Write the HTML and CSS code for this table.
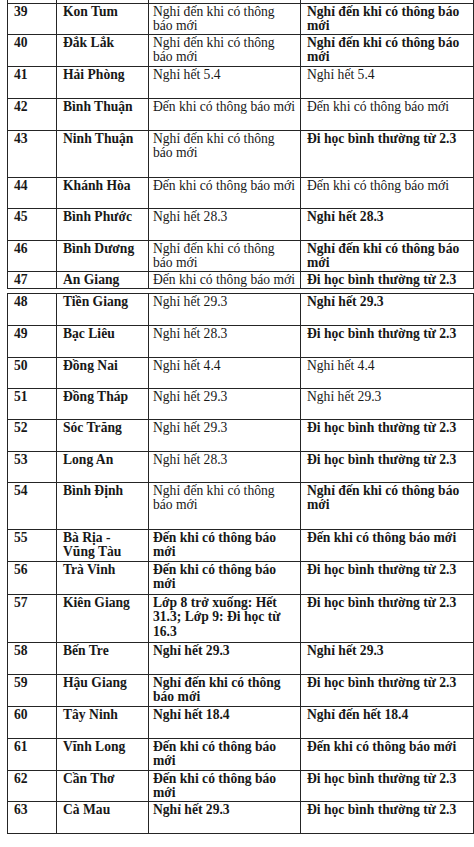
FILE: index.html
```html
<!DOCTYPE html>
<html lang="vi">
<head>
<meta charset="utf-8">
<title>Danh sách</title>
<link rel="stylesheet" href="styles.css">
</head>
<body>
<div class="page">
<table class="tbl t1">
<colgroup><col class="c1"><col class="c2"><col class="c3"><col class="c4"></colgroup>
<tr class="stub"><td></td><td></td><td></td><td></td></tr>
<tr class="p31"><td>39</td><td>Kon Tum</td><td class="n">Nghỉ đến khi có thông<br>báo mới</td><td>Nghỉ đến khi có thông báo<br>mới</td></tr>
<tr class="p32"><td>40</td><td>Đắk Lắk</td><td class="n">Nghỉ đến khi có thông<br>báo mới</td><td>Nghỉ đến khi có thông báo<br>mới</td></tr>
<tr class="p32"><td>41</td><td>Hải Phòng</td><td class="n">Nghỉ hết 5.4</td><td class="n">Nghỉ hết 5.4</td></tr>
<tr class="p32"><td>42</td><td>Bình Thuận</td><td class="n">Đến khi có thông báo mới</td><td class="n">Đến khi có thông báo mới</td></tr>
<tr class="p47"><td>43</td><td>Ninh Thuận</td><td class="n">Nghỉ đến khi có thông<br>báo mới</td><td>Đi học bình thường từ 2.3</td></tr>
<tr class="p31"><td>44</td><td>Khánh Hòa</td><td class="n">Đến khi có thông báo mới</td><td class="n">Đến khi có thông báo mới</td></tr>
<tr class="p32"><td>45</td><td>Bình Phước</td><td class="n">Nghỉ hết 28.3</td><td>Nghỉ hết 28.3</td></tr>
<tr class="p31"><td>46</td><td>Bình Dương</td><td class="n">Nghỉ đến khi có thông<br>báo mới</td><td>Nghỉ đến khi có thông báo<br>mới</td></tr>
<tr class="p17"><td>47</td><td>An Giang</td><td class="n">Đến khi có thông báo mới</td><td>Đi học bình thường từ 2.3</td></tr>
</table>
<table class="tbl t2">
<colgroup><col class="c1"><col class="c2"><col class="c3"><col class="c4"></colgroup>
<tr class="p32"><td>48</td><td>Tiền Giang</td><td class="n">Nghỉ hết 29.3</td><td>Nghỉ hết 29.3</td></tr>
<tr class="p32"><td>49</td><td>Bạc Liêu</td><td class="n">Nghỉ hết 28.3</td><td>Đi học bình thường từ 2.3</td></tr>
<tr class="p31"><td>50</td><td>Đồng Nai</td><td class="n">Nghỉ hết 4.4</td><td class="n">Nghỉ hết 4.4</td></tr>
<tr class="p31"><td>51</td><td>Đồng Tháp</td><td class="n">Nghỉ hết 29.3</td><td class="n">Nghỉ hết 29.3</td></tr>
<tr class="p32"><td>52</td><td>Sóc Trăng</td><td class="n">Nghỉ hết 29.3</td><td>Đi học bình thường từ 2.3</td></tr>
<tr class="p31"><td>53</td><td>Long An</td><td class="n">Nghỉ hết 28.3</td><td>Đi học bình thường từ 2.3</td></tr>
<tr class="p47"><td>54</td><td>Bình Định</td><td class="n">Nghỉ đến khi có thông<br>báo mới</td><td>Nghỉ đến khi có thông báo<br>mới</td></tr>
<tr class="p32"><td>55</td><td>Bà Rịa -<br>Vũng Tàu</td><td>Đến khi có thông báo<br>mới</td><td>Đến khi có thông báo mới</td></tr>
<tr class="p33"><td>56</td><td>Trà Vinh</td><td>Đến khi có thông báo<br>mới</td><td>Đi học bình thường từ 2.3</td></tr>
<tr class="p48"><td>57</td><td>Kiên Giang</td><td>Lớp 8 trở xuống: Hết<br>31.3; Lớp 9: Đi học từ<br>16.3</td><td>Đi học bình thường từ 2.3</td></tr>
<tr class="p32"><td>58</td><td>Bến Tre</td><td>Nghỉ hết 29.3</td><td>Nghỉ hết 29.3</td></tr>
<tr class="p32"><td>59</td><td>Hậu Giang</td><td>Nghỉ đến khi có thông<br>báo mới</td><td>Đi học bình thường từ 2.3</td></tr>
<tr class="p32"><td>60</td><td>Tây Ninh</td><td>Nghỉ hết 18.4</td><td>Nghỉ đến hết 18.4</td></tr>
<tr class="p32"><td>61</td><td>Vĩnh Long</td><td>Đến khi có thông báo<br>mới</td><td>Đến khi có thông báo mới</td></tr>
<tr class="p31"><td>62</td><td>Cần Thơ</td><td>Đến khi có thông báo<br>mới</td><td>Đi học bình thường từ 2.3</td></tr>
<tr class="p32"><td>63</td><td>Cà Mau</td><td>Nghỉ hết 29.3</td><td>Đi học bình thường từ 2.3</td></tr>
</table>
</div>
</body>
</html>
```
FILE: styles.css
```css
html, body {
  margin: 0;
  padding: 0;
  background: #ffffff;
}

body {
  font-family: "Liberation Serif", "Times New Roman", serif;
  font-size: 13.6px;
  line-height: 14.5px;
  color: #181818;
}

.page {
  padding-left: 7px;
}

.tbl {
  border-collapse: collapse;
  table-layout: fixed;
  width: 466px;
}

.t2 {
  margin-top: 4px;
}

.c1 { width: 49px; }
.c2 { width: 92px; }
.c3 { width: 152px; }
.c4 { width: 173px; }

.tbl td {
  border: 1px solid #252525;
  padding: 1px 2px 0 6px;
  vertical-align: top;
  font-weight: bold;
  white-space: nowrap;
  overflow: hidden;
  box-sizing: border-box;
}

.tbl td:nth-child(3) {
  padding-left: 4px;
}

.tbl td.n {
  font-weight: normal;
}

.stub td {
  border-top: none;
  padding: 0;
  height: 3px;
}

.p17 td { height: 17px; }
.p30 td { height: 30px; }
.p31 td { height: 31px; }
.p32 td { height: 32px; }
.p33 td { height: 33px; }
.p47 td { height: 47px; }
.p48 td { height: 48px; }
```
